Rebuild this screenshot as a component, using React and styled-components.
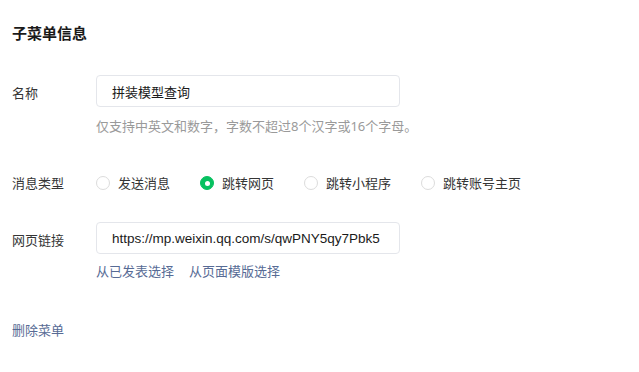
import React from 'react';
import styled, { createGlobalStyle } from 'styled-components';

const GlobalStyle = createGlobalStyle`
  body {
    margin: 0;
    background: #fff;
    font-family: "Noto Sans", "Noto Sans CJK SC", sans-serif;
  }
`;

export const Page = styled.div`
  padding: 23px 12px 0;
  width: 639px;
  height: 372px;
  box-sizing: border-box;
`;

export const Title = styled.h2`
  margin: 0;
  font-size: 15px;
  line-height: 21px;
  font-weight: bold;
  color: #1a1a1a;
`;

export const Row = styled.div`
  display: flex;
  align-items: flex-start;
  margin-top: ${(p) => p.$mt || 0}px;
`;

export const Label = styled.div`
  width: 84px;
  flex-shrink: 0;
  font-size: 13px;
  line-height: 20px;
  padding-top: ${(p) => p.$pt || 0}px;
  color: #353535;
`;

export const Field = styled.div`
  display: flex;
  flex-direction: column;
`;

export const Input = styled.input`
  width: 304px;
  height: 32px;
  box-sizing: border-box;
  border: 1px solid #e4e6eb;
  border-radius: 4px;
  padding: 0 12px 0 15px;
  font-family: "Liberation Sans", "Noto Sans CJK SC", sans-serif;
  font-size: ${(p) => p.$size || 13}px;
  color: #1a1a1a;
  outline: none;
  background: #fff;
`;

export const Hint = styled.div`
  margin-top: 9px;
  font-size: 13px;
  line-height: 20px;
  color: #9a9a9a;
  white-space: nowrap;
`;

export const RadioGroup = styled.div`
  display: flex;
  align-items: center;
`;

export const RadioItem = styled.label`
  display: flex;
  align-items: center;
  gap: 8px;
  margin-right: 30px;
  font-size: 13px;
  line-height: 20px;
  color: #353535;
`;

export const Dot = styled.span`
  width: 14px;
  height: 14px;
  box-sizing: border-box;
  border-radius: 50%;
  border: 1px solid ${(p) => (p.$on ? '#07c160' : '#dcdcdc')};
  background: ${(p) => (p.$on ? '#07c160' : '#fff')};
  display: flex;
  align-items: center;
  justify-content: center;

  &::after {
    content: '';
    display: ${(p) => (p.$on ? 'block' : 'none')};
    width: 5px;
    height: 5px;
    border-radius: 50%;
    background: #fff;
  }
`;

export const Links = styled.div`
  display: flex;
  gap: 15px;
  margin-top: 7px;
`;

export const Link = styled.a`
  font-size: 13px;
  line-height: 20px;
  color: #576b95;
  text-decoration: none;
  cursor: pointer;
`;

export const Footer = styled.div`
  margin-top: ${(p) => p.$mt || 0}px;
`;

const types = ['发送消息', '跳转网页', '跳转小程序', '跳转账号主页'];

export default function App() {
  return (
    <>
      <GlobalStyle />
      <Page>
        <Title>子菜单信息</Title>

        <Row $mt={31}>
          <Label $pt={8}>名称</Label>
          <Field>
            <Input defaultValue="拼装模型查询" />
            <Hint>仅支持中英文和数字，字数不超过8个汉字或16个字母。</Hint>
          </Field>
        </Row>

        <Row $mt={37}>
          <Label>消息类型</Label>
          <RadioGroup>
            {types.map((t, i) => (
              <RadioItem key={t}>
                <Dot $on={i === 1} />
                {t}
              </RadioItem>
            ))}
          </RadioGroup>
        </Row>

        <Row $mt={29}>
          <Label $pt={8}>网页链接</Label>
          <Field>
            <Input $size={13.5} defaultValue="https://mp.weixin.qq.com/s/qwPNY5qy7Pbk5" />
            <Links>
              <Link>从已发表选择</Link>
              <Link>从页面模版选择</Link>
            </Links>
          </Field>
        </Row>

        <Footer $mt={37}>
          <Link>删除菜单</Link>
        </Footer>
      </Page>
    </>
  );
}
